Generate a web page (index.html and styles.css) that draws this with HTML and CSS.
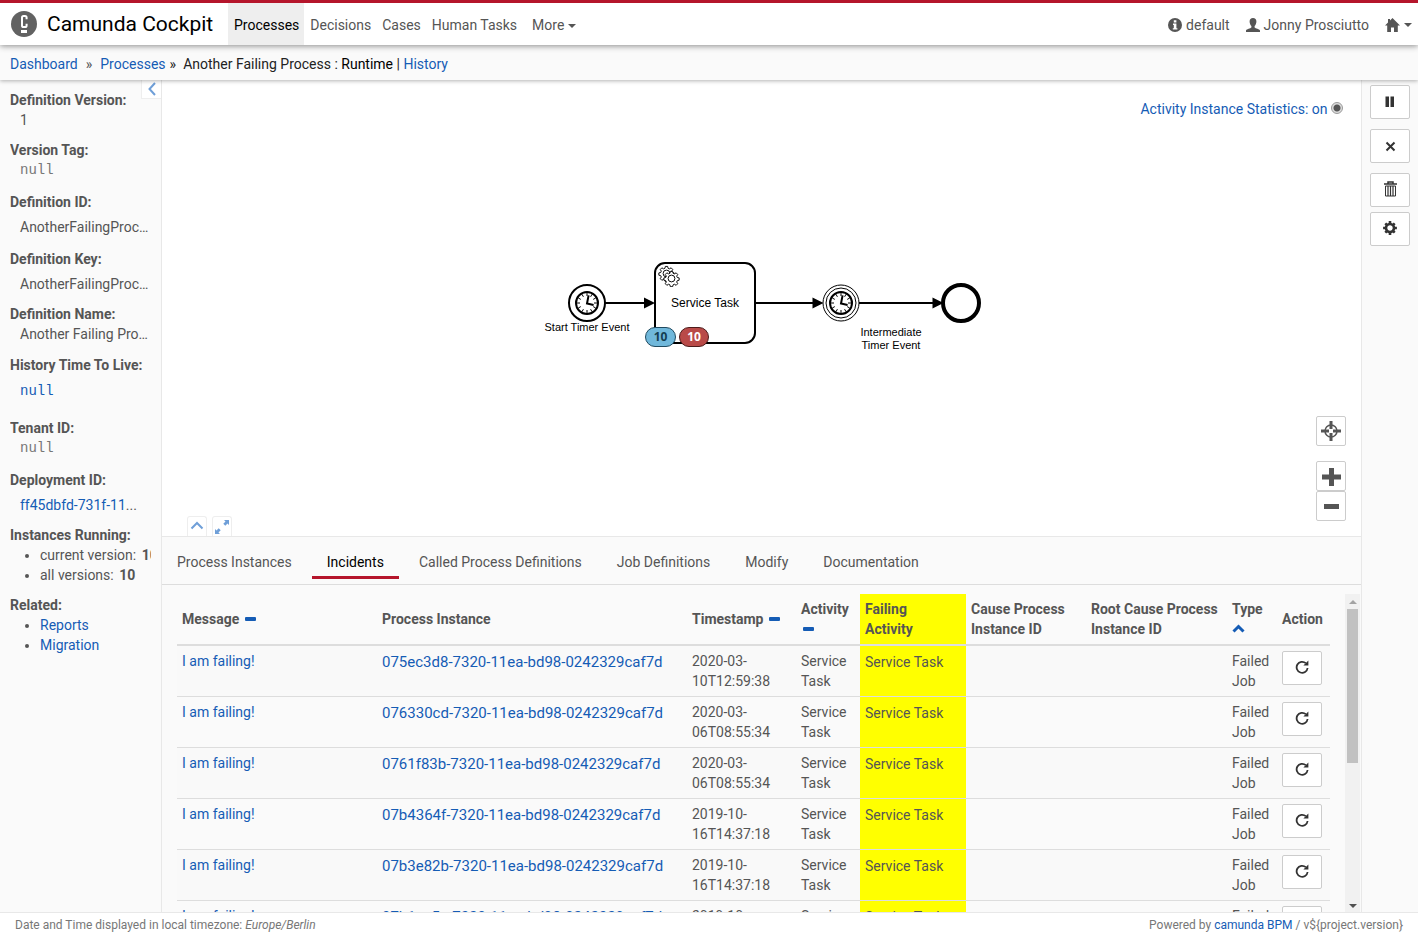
FILE: index.html
```html
<!DOCTYPE html>
<html lang="en">
<head>
<meta charset="utf-8">
<title>Camunda Cockpit</title>
<link rel="stylesheet" href="styles.css">
</head>
<body>
<svg class="defs" aria-hidden="true">
  <symbol id="retry" viewBox="0 0 14 14"><path d="M10.800 3.200A5.500 5.500 0 1 0 12.600 8" fill="none" stroke="currentColor" stroke-width="1.800"/><path d="M13.400.4v5H8.400z" fill="currentColor"/></symbol>
  <symbol id="minus" viewBox="0 0 12 12"><rect y="4" width="11" height="4" rx="1" fill="currentColor"/></symbol>
  <symbol id="clock" viewBox="-12 -12 24 24">
    <circle r="11" fill="#fff" stroke="#000" stroke-width="2"/>
    <path d="M0-10v3M0 10V7M-10 0h3M10 0H7M5-8.7 3.6-6.2M-5-8.7-3.6-6.2M5 8.7 3.6 6.2M-5 8.7-3.6 6.2M8.7-5 6.2-3.6M-8.7-5-6.2-3.6M8.7 5 6.2 3.6M-8.7 5-6.2 3.6" stroke="#000" stroke-width="1"/>
    <path d="M1.6-7.6 0 .6 6.6 2" fill="none" stroke="#000" stroke-width="2"/>
  </symbol>
  <symbol id="gear" viewBox="-9 -9 18 18">
    <path d="M-1.200-7.500h2.400l.5 2 1.400.6 1.800-1.100 1.700 1.700-1.100 1.800.6 1.400 2 .5v2.400l-2 .5-.6 1.400 1.100 1.800-1.700 1.700-1.800-1.100-1.400.6-.5 2h-2.400l-.5-2-1.400-.6-1.800 1.100-1.700-1.700 1.100-1.800-.6-1.400-2-.5v-2.400l2-.5.6-1.400-1.100-1.800 1.700-1.700 1.800 1.100 1.400-.6z" fill="#fff" stroke="#000"/>
    <circle r="3.600" fill="#fff" stroke="#000"/>
  </symbol>
</svg>

<header class="topbar">
  <a class="brand" href="#">
    <svg width="26" height="26" viewBox="0 0 26 26" aria-hidden="true"><circle cx="13" cy="13" r="13" fill="#626262"/><path d="M15.600 8.200V6.600a1.600 1.600 0 0 0-1.600-1.600h-1.400A1.600 1.600 0 0 0 11 6.600v7.800A1.600 1.600 0 0 0 12.600 16H14a1.600 1.600 0 0 0 1.600-1.600v-1.600" fill="none" stroke="#fff" stroke-width="2"/><rect x="10" y="19" width="6" height="3" fill="#fff"/></svg>
    <span>Camunda Cockpit</span>
  </a>
  <nav class="mainnav">
    <a class="active" href="#">Processes</a>
    <a href="#">Decisions</a>
    <a href="#">Cases</a>
    <a href="#">Human Tasks</a>
    <a class="more" href="#">More <i class="caret"></i></a>
  </nav>
  <nav class="usernav">
    <a href="#"><svg width="14" height="14" viewBox="0 0 14 14" aria-hidden="true"><circle cx="7" cy="7" r="7" fill="currentColor"/><path d="M5.800 2.200h2.600v2.200H5.800zM5 5.600h3.400v4.600h1v1.400H4.800v-1.400h1V7H5z" fill="#fff"/></svg>default</a>
    <a href="#"><svg width="14" height="14" viewBox="0 0 14 14" aria-hidden="true"><path d="M7 0C4.800 0 3.600 1.400 3.600 3.500c0 1.800.7 3.600 1.800 4.600v1.300C4.600 10.400.4 10.800 0 12.600V14h14v-1.400c-.4-1.800-4.600-2.200-5.400-3.200V8.100c1.100-1 1.800-2.800 1.800-4.600C10.400 1.400 9.200 0 7 0z" fill="currentColor"/></svg>Jonny Prosciutto</a>
    <a href="#" aria-label="Home"><svg width="15" height="14" viewBox="0 0 15 14" aria-hidden="true"><path d="M7.500 0 15 7.600h-2.200V14H9V9.500H6V14H2.200V7.600H0l3-3.100V1h2v1.500z" fill="currentColor"/></svg><i class="caret"></i></a>
  </nav>
</header>

<div class="crumbs">
  <a href="#">Dashboard</a><span class="sep">»</span><a href="#">Processes</a><span class="sep dark">»</span><span>Another Failing Process : <b>Runtime</b> | <a href="#">History</a></span>
</div>

<div class="layout">
  <aside class="info">
    <button class="collapse" aria-label="Collapse sidebar"><svg width="8" height="14" viewBox="0 0 8 14"><path d="M7 1 1.500 7 7 13" fill="none" stroke="#6f9fd8" stroke-width="2"/></svg></button>
    <dl>
      <dt>Definition Version:</dt><dd>1</dd>
      <dt>Version Tag:</dt><dd class="null wide">null</dd>
      <dt>Definition ID:</dt><dd class="clip wide">AnotherFailingProcess</dd>
      <dt>Definition Key:</dt><dd class="clip">AnotherFailingProcess</dd>
      <dt>Definition Name:</dt><dd class="name">Another Failing Process</dd>
      <dt>History Time To Live:</dt><dd class="clip null ttl"><a href="#">null</a></dd>
      <dt>Tenant ID:</dt><dd class="null wide">null</dd>
      <dt>Deployment ID:</dt><dd class="clip id"><a href="#">ff45dbfd-731f-11</a>...</dd>
      <dt>Instances Running:</dt>
      <dd class="list"><ul><li>current version: <strong>10</strong></li><li>all versions: <strong>10</strong></li></ul></dd>
      <dt>Related:</dt>
      <dd class="list"><ul><li><a href="#">Reports</a></li><li><a href="#">Migration</a></li></ul></dd>
    </dl>
  </aside>

  <main class="center">
    <section class="diagram">
      <label class="stats">Activity Instance Statistics: on <input type="radio" checked></label>
      <svg class="bpmn" width="444" height="100" viewBox="0 0 444 100" role="img" aria-label="Process diagram">
        <g stroke="#000" stroke-width="2"><path d="M66 45h40M216 45h58M320 45h74"/></g>
        <path d="M105 39.500 116 45l-11 5.500zM273.500 39.500l11 5.500-11 5.500zM393.500 39.500l11 5.500-11 5.500z"/>
        <circle cx="48" cy="45" r="18" fill="#fff" stroke="#000" stroke-width="2"/>
        <use href="#clock" x="36" y="33" width="24" height="24"/>
        <rect x="116" y="5" width="100" height="80" rx="10" fill="#fff" stroke="#000" stroke-width="2"/>
        <use href="#gear" x="119" y="7" width="17" height="17"/>
        <use href="#gear" x="124" y="12" width="17" height="17"/>
        <circle cx="302" cy="45" r="18" fill="#fff" stroke="#000"/>
        <circle cx="302" cy="45" r="15" fill="#fff" stroke="#000"/>
        <use href="#clock" x="290" y="33" width="24" height="24"/>
        <circle cx="422" cy="45" r="18" fill="#fff" stroke="#000" stroke-width="4"/>
        <g class="names"><text x="48" y="73">Start Timer Event</text><text class="task" x="166" y="49">Service Task</text><text x="352" y="78">Intermediate</text><text x="352" y="91">Timer Event</text></g>
        <rect x="106.500" y="69.500" width="30" height="19" rx="9.500" fill="#70b8db" stroke="#1f4a60"/>
        <rect x="140.500" y="69.500" width="29" height="19" rx="9.500" fill="#b94a48" stroke="#4d1c1b"/>
        <g class="counts"><text x="121.500" y="83" fill="#143e52">10</text><text x="155" y="83" fill="#fff">10</text></g>
      </svg>
      <div class="zoom">
        <button class="reset" aria-label="Reset zoom"><svg width="20" height="20" viewBox="0 0 20 20"><circle cx="10" cy="10" r="6" fill="none" stroke="#555" stroke-width="1.500"/><path d="M10 0v8M10 12v8M0 10h8M12 10h8" stroke="#555" stroke-width="3"/></svg></button>
        <button aria-label="Zoom in"><svg width="20" height="20" viewBox="0 0 20 20"><path d="M10.500 2v18M1 11h19" stroke="#555" stroke-width="5"/></svg></button>
        <button aria-label="Zoom out"><svg width="20" height="20" viewBox="0 0 20 20"><path d="M3 10.500h15" stroke="#555" stroke-width="5"/></svg></button>
      </div>
      <div class="resize">
        <button aria-label="Collapse"><svg width="14" height="14" viewBox="0 0 14 14"><path d="M1.500 8.500 7 3l5.500 5.500" fill="none" stroke="#6f9fd8" stroke-width="2"/></svg></button>
        <button aria-label="Maximize"><svg width="14" height="14" viewBox="0 0 14 14"><path d="M9 0h5v5l-1.500-1.500L10.300 5.700 8.300 3.700 10.500 1.500zM5 14H0V9l1.500 1.500L3.700 8.300l2 2L3.500 12.500z" fill="#6f9fd8"/></svg></button>
      </div>
    </section>
    <nav class="tabs">
      <a href="#">Process Instances</a><a class="active" href="#">Incidents</a><a href="#">Called Process Definitions</a><a href="#">Job Definitions</a><a href="#">Modify</a><a href="#">Documentation</a>
    </nav>
    <section class="incidents">
      <div class="tablewrap">
        <table>
          <colgroup><col class="c-msg"><col class="c-inst"><col class="c-time"><col class="c-act"><col class="c-fail"><col class="c-cause"><col class="c-root"><col class="c-type"><col class="c-action"></colgroup>
          <thead><tr>
            <th>Message <svg class="sort" aria-hidden="true"><use href="#minus"/></svg></th><th>Process Instance</th><th>Timestamp <svg class="sort" aria-hidden="true"><use href="#minus"/></svg></th><th>Activity <svg class="sort" aria-hidden="true"><use href="#minus"/></svg></th><th class="mark">Failing<br>Activity</th><th>Cause Process Instance ID</th><th>Root Cause Process Instance ID</th><th>Type<br><svg class="sort up" viewBox="0 0 13 12" aria-hidden="true"><path d="M1.500 8.500 6.500 3.500l5 5" fill="none" stroke="currentColor" stroke-width="3"/></svg></th><th>Action</th>
          </tr></thead>
          <tbody>
            <tr><td><a href="#">I am failing!</a></td><td class="uuid"><a href="#">075ec3d8-7320-11ea-bd98-0242329caf7d</a></td><td>2020-03-10T12:59:38</td><td>Service Task</td><td class="mark">Service Task</td><td></td><td></td><td>Failed Job</td><td><button aria-label="Retry"><svg><use href="#retry"/></svg></button></td></tr>
            <tr><td><a href="#">I am failing!</a></td><td class="uuid"><a href="#">076330cd-7320-11ea-bd98-0242329caf7d</a></td><td>2020-03-06T08:55:34</td><td>Service Task</td><td class="mark">Service Task</td><td></td><td></td><td>Failed Job</td><td><button aria-label="Retry"><svg><use href="#retry"/></svg></button></td></tr>
            <tr><td><a href="#">I am failing!</a></td><td class="uuid"><a href="#">0761f83b-7320-11ea-bd98-0242329caf7d</a></td><td>2020-03-06T08:55:34</td><td>Service Task</td><td class="mark">Service Task</td><td></td><td></td><td>Failed Job</td><td><button aria-label="Retry"><svg><use href="#retry"/></svg></button></td></tr>
            <tr><td><a href="#">I am failing!</a></td><td class="uuid"><a href="#">07b4364f-7320-11ea-bd98-0242329caf7d</a></td><td>2019-10-16T14:37:18</td><td>Service Task</td><td class="mark">Service Task</td><td></td><td></td><td>Failed Job</td><td><button aria-label="Retry"><svg><use href="#retry"/></svg></button></td></tr>
            <tr><td><a href="#">I am failing!</a></td><td class="uuid"><a href="#">07b3e82b-7320-11ea-bd98-0242329caf7d</a></td><td>2019-10-16T14:37:18</td><td>Service Task</td><td class="mark">Service Task</td><td></td><td></td><td>Failed Job</td><td><button aria-label="Retry"><svg><use href="#retry"/></svg></button></td></tr>
            <tr><td><a href="#">I am failing!</a></td><td class="uuid"><a href="#">07b1ec5a-7320-11ea-bd98-0242329caf7d</a></td><td>2019-10-16T14:37:18</td><td>Service Task</td><td class="mark">Service Task</td><td></td><td></td><td>Failed Job</td><td><button aria-label="Retry"><svg><use href="#retry"/></svg></button></td></tr>
          </tbody>
        </table>
      </div>
      <div class="scrollbar" aria-hidden="true"><i class="arrow-up"></i><div class="thumb"></div><i class="arrow-down"></i></div>
    </section>
  </main>

  <aside class="actions">
    <button aria-label="Suspend"><svg width="14" height="14" viewBox="0 0 14 14"><path d="M2.500 1.500H6V12H2.500zM7.500 1.500H11V12H7.500z" fill="#333"/></svg></button>
    <button aria-label="Close"><svg width="14" height="14" viewBox="0 0 14 14"><path d="m3.500 3.500 8 8m0-8-8 8" stroke="#333" stroke-width="2"/></svg></button>
    <button class="tight" aria-label="Delete"><svg width="14" height="18" viewBox="0 0 14 18"><path d="M5 2.500V1h5v1.500M1 3h13" fill="none" stroke="#333" stroke-width="1.500"/><path d="M2.500 5h10v10h-10z" fill="#fff" stroke="#333"/><path d="M5 5v10M7.500 5v10M10 5v10" stroke="#333" stroke-width="1.200"/></svg></button>
    <button aria-label="Settings"><svg width="14" height="16" viewBox="-7 -7 14 16"><circle r="4" fill="none" stroke="#333" stroke-width="2.600"/><path d="M0-6.900V-4M0 4v2.900M-6.900 0H-4M4 0h2.900M-4.700-4.700l1.500 1.500M4.700 4.700 3.200 3.200M4.700-4.700 3.200-3.200M-4.700 4.700l1.500-1.500" stroke="#333" stroke-width="2.600"/></svg></button>
  </aside>
</div>

<footer class="footer">
  <span>Date and Time displayed in local timezone: <em>Europe/Berlin</em></span>
  <span>Powered by <a href="#">camunda BPM</a> / v${project.version}</span>
</footer>
</body>
</html>
```
FILE: styles.css
```css
* { box-sizing: border-box; }

body {
  margin: 0;
  height: 100vh;
  display: flex;
  flex-direction: column;
  overflow: hidden;
  background: #fafafa;
  color: #555;
  font: 14px/20px Roboto, "Noto Sans", sans-serif;
}

a { color: #155cb5; text-decoration: none; }
button { padding: 0; font: inherit; cursor: pointer; display: flex; align-items: center; justify-content: center; }
.defs { display: none; }

.caret {
  display: inline-block;
  border: 4px solid transparent;
  border-top-color: currentColor;
  border-bottom: 0;
  vertical-align: middle;
}

/* Header */
.topbar {
  flex: none;
  display: flex;
  height: 45px;
  border-top: 3px solid #b5152b;
  background: #fff;
  box-shadow: 0 1px 6px rgba(0, 0, 0, .45);
  z-index: 2;
}
.brand {
  display: flex;
  align-items: center;
  gap: 10px;
  width: 228px;
  padding-left: 11px;
  color: #000;
  font-size: 21px;
  white-space: nowrap;
}
.mainnav { display: flex; }
.mainnav a { padding: 12px 5px 0 6px; color: #555; font-size: 14px; }
.mainnav .active { padding-right: 5px; background: #eee; color: #000; }
.mainnav .more { padding-left: 10px; }
.usernav { display: flex; gap: 16px; margin-left: auto; padding: 2px 6px 0 0; }
.usernav a { display: flex; align-items: center; gap: 4px; color: #555; }

.crumbs {
  flex: none;
  height: 35px;
  padding: 9px 10px;
  color: #222;
  background: #fafafa;
  box-shadow: 0 1px 4px rgba(0, 0, 0, .3);
  z-index: 1;
}
.crumbs b { color: #000; font-weight: 400; }
.sep { padding: 0 8px; color: #555; }
.dark { padding: 0 7px 0 4px; color: #222; }

/* Columns */
.layout { flex: 1; min-height: 0; display: flex; }
.info { position: relative; flex: none; width: 162px; padding: 10px; border-right: 1px solid #e8e8e8; }
.info dl { margin: 0; overflow: hidden; }
.info dt { font-weight: 700; white-space: nowrap; }
.info dd { margin: 0 0 10px; padding-left: 10px; overflow: hidden; text-overflow: ellipsis; white-space: nowrap; }
.info .clip { padding-top: 5px; }
.info .wide { margin-bottom: 12px; }
.info .name { margin-bottom: 11px; }
.info .null { color: #777; font-family: "Liberation Mono", monospace; }
.info .ttl { padding-top: 6px; margin-bottom: 17px; }
.info .list { padding-left: 0; text-overflow: clip; }
.info ul { margin: 0; padding-left: 30px; }
.info li strong { margin-left: 2px; }
.collapse {
  position: absolute;
  top: 0;
  right: 0;
  width: 20px;
  height: 19px;
  border: 1px solid #eee;
  border-width: 0 0 1px 1px;
  background: #fff;
}

.center { flex: 1; min-width: 0; display: flex; flex-direction: column; background: #fff; }
.diagram { position: relative; height: 456px; display: flex; align-items: center; justify-content: center; padding-right: 2px; }
.stats { position: absolute; top: 19px; right: 18px; color: #155cb5; }
.stats input {
  appearance: none;
  width: 12px;
  height: 12px;
  margin: 0;
  border: 1px solid #999;
  border-radius: 50%;
  background: radial-gradient(circle, #555 3px, #ddd 4px);
}
.names { font: 11px "Liberation Sans", Arial, sans-serif; text-anchor: middle; }
.names .task { font-size: 12px; }
.counts { font: bold 12px "Open Sans", sans-serif; text-anchor: middle; }
.zoom { position: absolute; right: 15px; bottom: 15px; }
.zoom button { width: 30px; height: 30px; border: 1px solid #ccc; border-radius: 2px; background: #fff; }
.zoom .reset { margin-bottom: 15px; }
.resize { position: absolute; left: 25px; bottom: 0; display: flex; gap: 5px; }
.resize button { width: 20px; height: 20px; border: 1px solid #eee; border-bottom: 0; border-radius: 3px 3px 0 0; background: #fff; }

.tabs {
  flex: none;
  display: flex;
  gap: 5px;
  height: 49px;
  border-top: 1px solid #e8e8e8;
  border-bottom: 1px solid #ddd;
  background: #fafafa;
}
.tabs a { height: 42px; padding: 15px 15px 0; color: #555; }
.tabs .active { color: #000; border-bottom: 3px solid #b5152b; }

.incidents { flex: 1; min-height: 0; display: flex; padding: 9px 1px 0 15px; background: #fafafa; }
.tablewrap { flex: 1; overflow: hidden; padding-right: 15px; }
table { width: 100%; table-layout: fixed; border-collapse: separate; border-spacing: 0; }
th { height: 52px; padding: 5px; text-align: left; border-bottom: 2px solid #ddd; }
td { height: 51px; padding: 5px; vertical-align: top; border-bottom: 1px solid #ddd; }
tbody tr:nth-child(odd) { background: #f9f9f9; }
.c-msg { width: 200px; }
.c-inst { width: 310px; }
.c-time { width: 109px; }
.c-act { width: 64px; }
.c-fail { width: 106px; }
.c-cause { width: 120px; }
.c-root { width: 141px; }
.c-type { width: 50px; }
.c-action { width: 53px; }
.mark { background: #ff0; }
td.mark, td.uuid { padding-top: 6px; }
.uuid { font-size: 15px; }
.sort { width: 12px; height: 12px; margin-left: 2px; color: #155cb5; vertical-align: -1px; }
.up { width: 13px; margin-left: 0; }
td button { width: 40px; height: 34px; padding-bottom: 2px; border: 1px solid #ccc; border-radius: 2px; background: #fff; color: #333; }
td button svg { width: 14px; height: 14px; }

.scrollbar { width: 15px; display: flex; flex-direction: column; align-items: center; background: #f1f1f1; }
.scrollbar i { flex: none; border: 4px solid transparent; }
.scrollbar .arrow-up { margin: 2px 0 5px; border-bottom-color: #a3a3a3; }
.scrollbar .arrow-down { margin-top: auto; border-top-color: #505050; }
.thumb { width: 11px; height: 154px; background: #c1c1c1; }

.actions { flex: none; width: 57px; padding: 5px 8px; border-left: 1px solid #e8e8e8; }
.actions button { width: 40px; height: 34px; margin-bottom: 10px; border: 1px solid #ccc; border-radius: 2px; background: #fff; }
.actions .tight { margin-bottom: 5px; }

.footer {
  flex: none;
  display: flex;
  justify-content: space-between;
  height: 24px;
  padding: 2px 15px;
  border-top: 1px solid #e8e8e8;
  background: #fff;
  color: #777;
  font-size: 12px;
}
```
